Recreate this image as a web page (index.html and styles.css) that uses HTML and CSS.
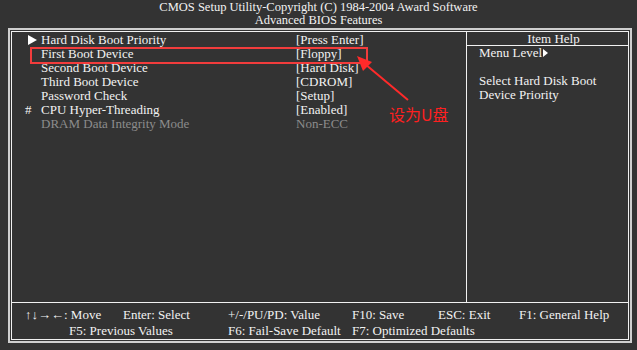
FILE: index.html
```html
<!DOCTYPE html>
<html lang="en">
<head>
    <meta charset="UTF-8">
    <title>Advanced BIOS Features</title>
    <link rel="stylesheet" href="styles.css">
</head>
<body>
    <div class="header">
        <div>CMOS Setup Utility-Copyright (C) 1984-2004 Award Software</div>
        <div>Advanced BIOS Features</div>
    </div>

    <div class="frame">
        <div class="inner">
            <div class="main">
                <div class="items">
                    <div class="row">
                        <span class="mark"><svg width="9" height="10" viewBox="0 0 9 10"><polygon points="0,0 9,5 0,10" fill="#fff"/></svg></span>
                        <span>Hard Disk Boot Priority</span>
                        <span>[Press Enter]</span>
                    </div>
                    <div class="row">
                        <span class="mark"></span>
                        <span>First Boot Device</span>
                        <span>[Floppy]</span>
                    </div>
                    <div class="row">
                        <span class="mark"></span>
                        <span>Second Boot Device</span>
                        <span>[Hard Disk]</span>
                    </div>
                    <div class="row">
                        <span class="mark"></span>
                        <span>Third Boot Device</span>
                        <span>[CDROM]</span>
                    </div>
                    <div class="row">
                        <span class="mark"></span>
                        <span>Password Check</span>
                        <span>[Setup]</span>
                    </div>
                    <div class="row">
                        <span class="mark hash">#</span>
                        <span>CPU Hyper-Threading</span>
                        <span>[Enabled]</span>
                    </div>
                    <div class="row disabled">
                        <span class="mark"></span>
                        <span>DRAM Data Integrity Mode</span>
                        <span>Non-ECC</span>
                    </div>
                </div>

                <div class="help">
                    <div class="help-title">Item Help</div>
                    <div class="help-body">
                        <div>Menu Level<svg class="level" width="5" height="8" viewBox="0 0 5 8"><polygon points="0,0 5,4 0,8" fill="#fff"/></svg></div>
                        <div>&nbsp;</div>
                        <div>Select Hard Disk Boot</div>
                        <div>Device Priority</div>
                    </div>
                </div>
            </div>

            <div class="footer">
                <span>&uarr;&darr;&rarr;&larr;: Move</span>
                <span>Enter: Select</span>
                <span>+/-/PU/PD: Value</span>
                <span>F10: Save</span>
                <span>ESC: Exit</span>
                <span>F1: General Help</span>
                <span class="f5">F5: Previous Values</span>
                <span>F6: Fail-Save Default</span>
                <span class="f7">F7: Optimized Defaults</span>
            </div>
        </div>
    </div>

    <!-- annotation over the screenshot -->
    <div class="highlight"></div>
    <svg class="arrow" width="637" height="350" viewBox="0 0 637 350">
        <line x1="408" y1="100" x2="365" y2="64" stroke="#ff2a2a" stroke-width="2"/>
        <polygon points="357,56 372,62 363,71" fill="#ff2a2a"/>
    </svg>
    <div class="note">设为U盘</div>
</body>
</html>
```

FILE: styles.css
```css
body {
    margin: 0;
    background-color: #333333;
    color: #f2f2f2;
    font-family: "Liberation Serif", "Times New Roman", serif;
    font-size: 13px;
    width: 637px;
    height: 350px;
    overflow: hidden;
    position: relative;
}
.header {
    text-align: center;
    font-size: 12.5px;
    line-height: 13px;
    padding: 1px 0 1px;
}
.frame {
    box-sizing: border-box;
    width: 624px;
    margin-left: 8px;
    border: 2px solid #cfcfcf;
    padding: 1px;
}
.inner {
    border: 1px solid #f2f2f2;
}
.main {
    display: grid;
    grid-template-columns: 454px 1fr;
    height: 270px;
    border-bottom: 1px solid #f2f2f2;
}
.items {
    padding: 1px 0 0 12px;
}
.row {
    display: grid;
    grid-template-columns: 17px 255px auto;
    line-height: 14px;
    height: 14px;
}
.mark {
    display: flex;
    align-items: center;
    padding-left: 4px;
}
.mark.hash {
    padding-left: 1px;
}
.row.disabled {
    color: #8c8c8c;
}
.help {
    border-left: 1px solid #f2f2f2;
}
.help-title {
    text-align: center;
    padding-left: 12px;
    line-height: 13px;
    height: 13px;
    border-bottom: 1px solid #f2f2f2;
}
.help-body {
    padding: 0 0 0 12px;
    line-height: 14px;
}
.level {
    margin-left: 1px;
}
.footer {
    display: grid;
    grid-template-columns: 98px 105px 124px 86px 81px 1fr;
    line-height: 15px;
    height: 36px;
    box-sizing: border-box;
    padding: 4px 0 0 13px;
}
.footer .f5 {
    grid-column: 1 / 3;
    padding-left: 44px;
}
.footer .f7 {
    grid-column: 4 / 7;
}
.highlight {
    position: absolute;
    left: 30px;
    top: 47px;
    width: 334px;
    height: 13px;
    border: 2px solid #f23c3c;
}
.arrow {
    position: absolute;
    left: 0;
    top: 0;
}
.note {
    position: absolute;
    left: 389px;
    top: 104px;
    color: #ff2020;
    font-family: "Noto Sans CJK SC", sans-serif;
    font-size: 16px;
    line-height: 20px;
}
```
